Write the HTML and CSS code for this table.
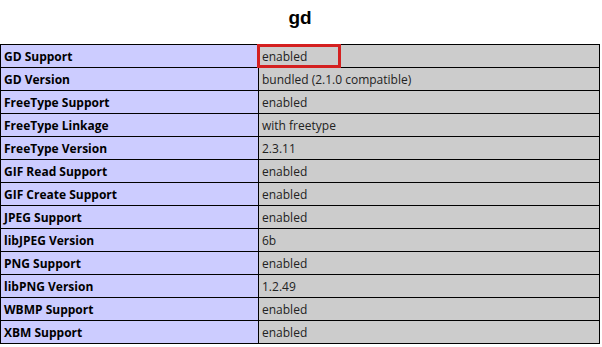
FILE: index.html
```html
<!DOCTYPE html>
<html>
<head>
<meta charset="utf-8">
<title>gd</title>
<link rel="stylesheet" href="styles.css">
</head>
<body>
<h2 class="module-title">gd</h2>
<table class="info">
<tr><td class="e">GD Support</td><td class="v marked">enabled</td></tr>
<tr><td class="e">GD Version</td><td class="v">bundled (2.1.0 compatible)</td></tr>
<tr><td class="e">FreeType Support</td><td class="v">enabled</td></tr>
<tr><td class="e">FreeType Linkage</td><td class="v">with freetype</td></tr>
<tr><td class="e">FreeType Version</td><td class="v">2.3.11</td></tr>
<tr><td class="e">GIF Read Support</td><td class="v">enabled</td></tr>
<tr><td class="e">GIF Create Support</td><td class="v">enabled</td></tr>
<tr><td class="e">JPEG Support</td><td class="v">enabled</td></tr>
<tr><td class="e">libJPEG Version</td><td class="v">6b</td></tr>
<tr><td class="e">PNG Support</td><td class="v">enabled</td></tr>
<tr><td class="e">libPNG Version</td><td class="v">1.2.49</td></tr>
<tr><td class="e">WBMP Support</td><td class="v">enabled</td></tr>
<tr><td class="e">XBM Support</td><td class="v">enabled</td></tr>
</table>
</body>
</html>
```
FILE: styles.css
```css
html, body {
  margin: 0;
  background: #fff;
  color: #000;
}
body {
  font-family: "Open Sans", "Noto Sans CJK KR", sans-serif;
  font-size: 12px;
}
.module-title {
  margin: 0;
  height: 44px;
  line-height: 36px;
  text-align: center;
  font-family: "Liberation Sans", Arial, sans-serif;
  font-size: 19px;
  font-weight: bold;
  width: 600px;
}
.info {
  border-collapse: collapse;
  width: 600px;
}
.info td {
  border: 1px solid #000;
  height: 23px;
  padding: 1px 3px 0;
  box-sizing: border-box;
  vertical-align: middle;
  white-space: nowrap;
}
.e {
  background: #ccf;
  font-weight: bold;
  width: 258px;
}
.v {
  background: #ccc;
  color: #222;
}
/* highlight frame around the first value */
.marked {
  position: relative;
}
.marked::after {
  content: "";
  position: absolute;
  left: -2px;
  top: -1px;
  width: 84px;
  height: 24px;
  box-sizing: border-box;
  border: 3px solid #d42020;
}
```
